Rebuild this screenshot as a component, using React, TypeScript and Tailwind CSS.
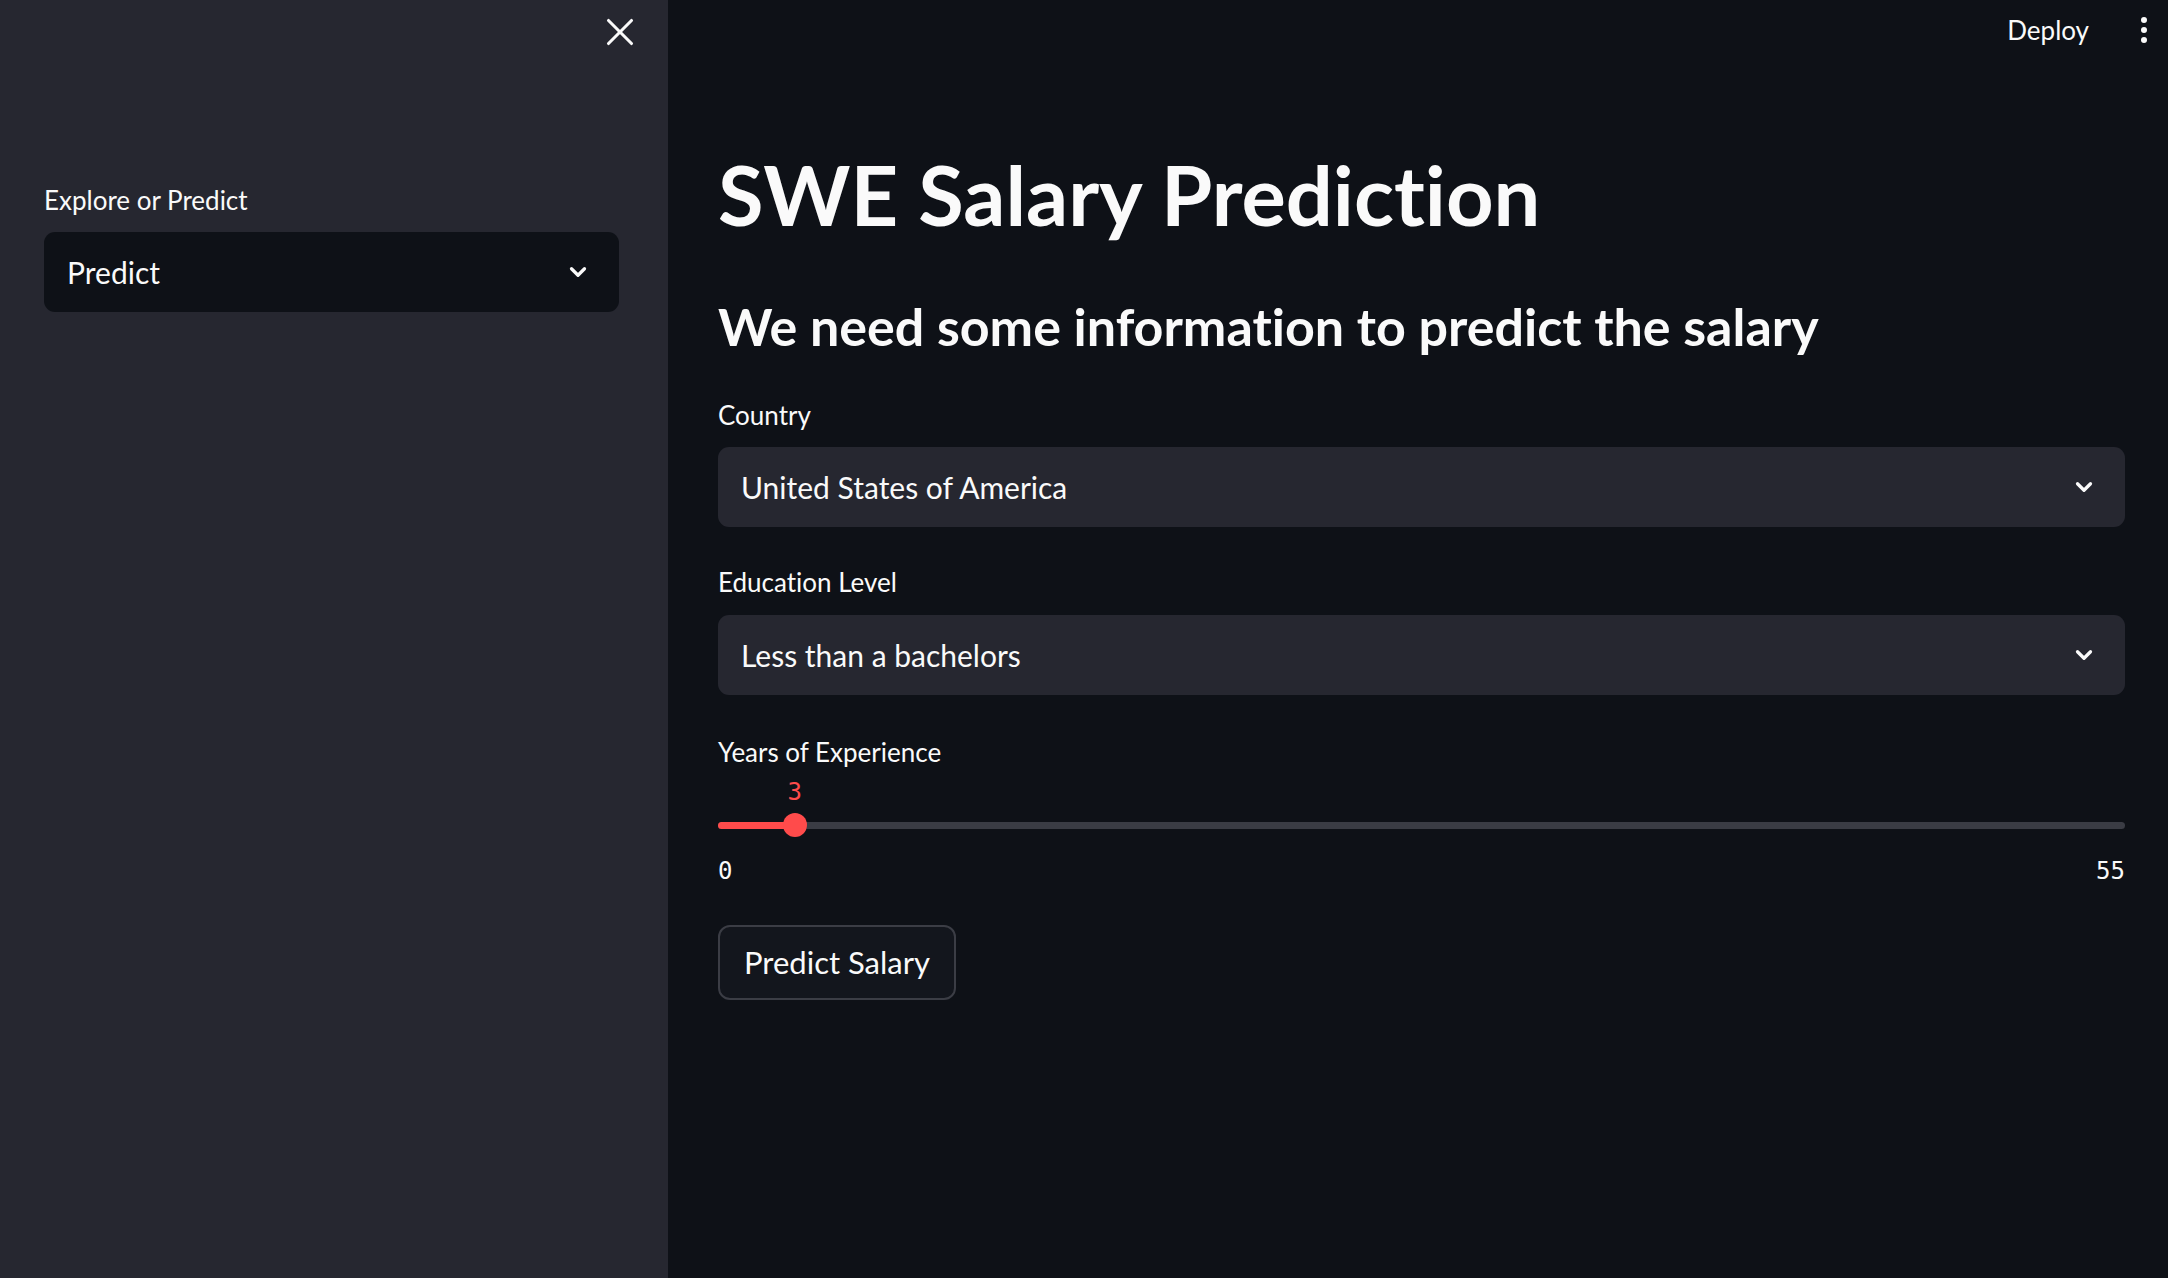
import { X, ChevronDown } from "lucide-react";

const font = { fontFamily: "Lato, 'Noto Sans', sans-serif" };

const SelectBox = ({ value, dark }: { value: string; dark?: boolean }) => {
  return (
    <div
      className={`flex h-[80px] items-center justify-between rounded-[11px] pl-[23px] pr-[28px] ${
        dark ? "bg-[#0e1117]" : "bg-[#262730]"
      }`}
    >
      <span className="text-[30px] text-[#fafafa]">{value}</span>
      <ChevronDown className="h-[26px] w-[26px] text-[#fafafa]" strokeWidth={3} />
    </div>
  );
};

const App = () => {
  const years = 3;
  const maxYears = 55;
  const pct = (years / maxYears) * 100;

  return (
    <div className="flex h-[1278px] w-full overflow-hidden [font-variant-ligatures:none]" style={font}>
      {/* Sidebar */}
      <aside className="flex w-[668px] shrink-0 flex-col bg-[#262730] pl-[44px] pr-[49px] pb-8">
        <div className="flex h-[64px] items-center justify-end">
          <X className="mr-[-24px] h-[46px] w-[46px] text-[#fafafa]" strokeWidth={1.6} />
        </div>
        <label className="mt-[120px] block text-[26px] leading-[32px] text-[#fafafa]">
          Explore or Predict
        </label>
        <div className="mt-[16px]">
          <SelectBox value="Predict" dark />
        </div>
      </aside>

      {/* Main */}
      <main className="flex flex-1 flex-col bg-[#0e1117]">
        <div className="flex h-[60px] items-center justify-end gap-[52px] pr-[21px]">
          <span className="text-[26px] text-[#fafafa]">Deploy</span>
          <div className="flex flex-col gap-[4px]">
            <span className="block h-[6px] w-[6px] rounded-full bg-[#fafafa]" />
            <span className="block h-[6px] w-[6px] rounded-full bg-[#fafafa]" />
            <span className="block h-[6px] w-[6px] rounded-full bg-[#fafafa]" />
          </div>
        </div>

        <div className="flex flex-col pl-[50px] pr-[43px]">
          <h1 className="mt-[86px] text-[83px] font-bold leading-[96px] text-[#fafafa]">
            SWE Salary Prediction
          </h1>
          <h3 className="mt-[52px] text-[52px] font-bold leading-[64px] text-[#fafafa]">
            We need some information to predict the salary
          </h3>

          <label className="mt-[41px] block text-[26px] leading-[32px] text-[#fafafa]">Country</label>
          <div className="mt-[16px]">
            <SelectBox value="United States of America" />
          </div>

          <label className="mt-[39px] block text-[26px] leading-[32px] text-[#fafafa]">
            Education Level
          </label>
          <div className="mt-[17px]">
            <SelectBox value="Less than a bachelors" />
          </div>

          <label className="mt-[41px] block text-[26px] leading-[32px] text-[#fafafa]">
            Years of Experience
          </label>

          {/* Slider */}
          <div className="mt-[8px]" style={{ fontFamily: "'DejaVu Sans Mono', 'Liberation Mono', monospace" }}>
            <div className="relative h-[32px]">
              <span
                className="absolute top-0 -translate-x-1/2 text-[24px] leading-[32px] text-[#ff4b4b]"
                style={{ left: `${pct}%` }}
              >
                {years}
              </span>
            </div>
            <div className="relative mt-[5px] flex h-[24px] items-center">
              <div className="h-[7px] w-full rounded-full bg-[#3a3c44]" />
              <div
                className="absolute left-0 h-[7px] rounded-full bg-[#ff4b4b]"
                style={{ width: `${pct}%` }}
              />
              <div
                className="absolute h-[24px] w-[24px] -translate-x-1/2 rounded-full bg-[#ff4b4b]"
                style={{ left: `${pct}%` }}
              />
            </div>
            <div className="mt-[18px] flex justify-between text-[24px] leading-[32px] text-[#fafafa]">
              <span>0</span>
              <span>{maxYears}</span>
            </div>
          </div>

          <div className="mt-[38px]">
            <button className="h-[75px] rounded-[12px] border-2 border-[#3b3d45] bg-[#13161d] px-[24px] text-[31px] text-[#fafafa]">
              Predict Salary
            </button>
          </div>
        </div>
      </main>
    </div>
  );
};

export default App;
